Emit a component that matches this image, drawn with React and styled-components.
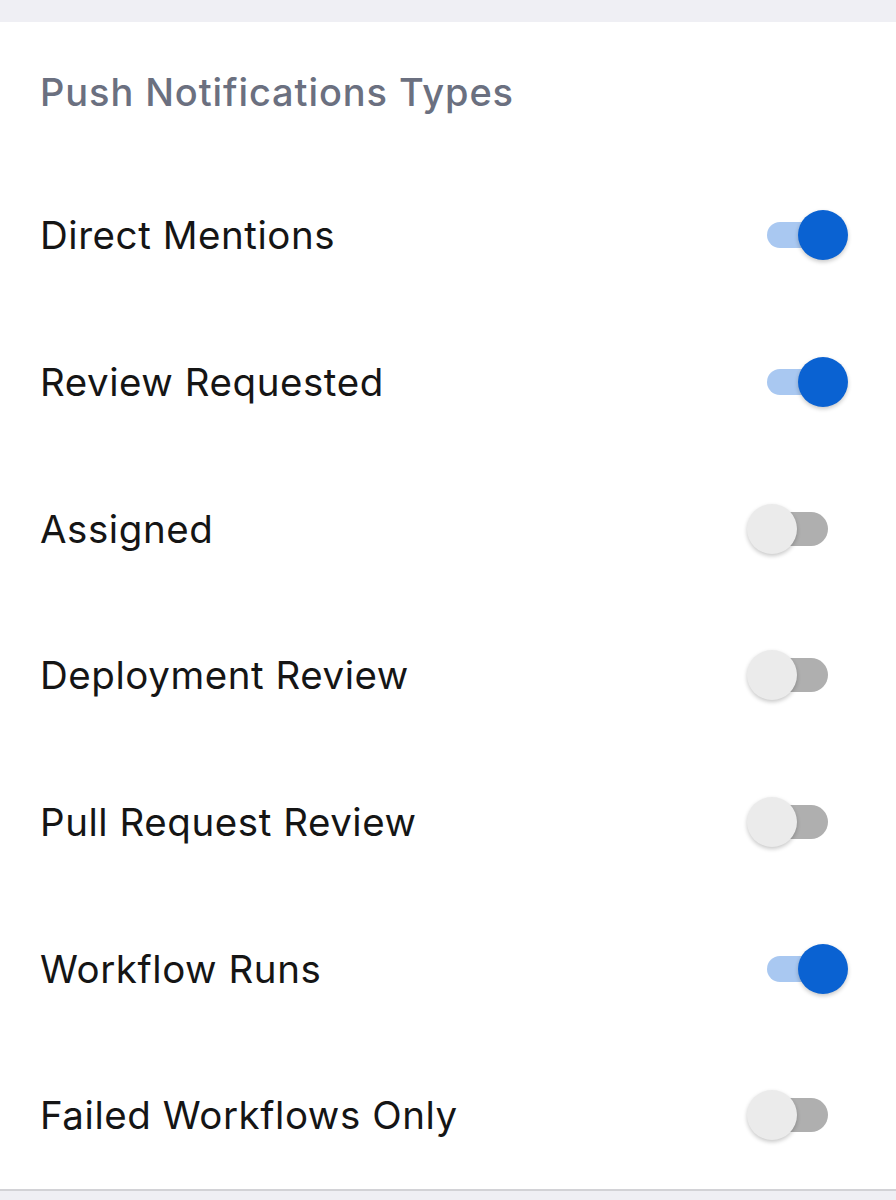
import React, { useState } from "react";
import styled, { createGlobalStyle } from "styled-components";

const GlobalStyle = createGlobalStyle`
  html, body {
    margin: 0;
    padding: 0;
    background: #efeff4;
    font-family: Inter, "Noto Sans", sans-serif;
  }
`;

const types = [
  { id: "mentions", label: "Direct Mentions", on: true },
  { id: "review", label: "Review Requested", on: true },
  { id: "assigned", label: "Assigned", on: false },
  { id: "deploy", label: "Deployment Review", on: false },
  { id: "pr", label: "Pull Request Review", on: false },
  { id: "runs", label: "Workflow Runs", on: true },
  { id: "failed", label: "Failed Workflows Only", on: false },
];

const Page = styled.div`
  width: 896px;
  height: 1200px;
  padding-top: 22px;
  box-sizing: border-box;
  background: #efeff4;
  overflow: hidden;
`;

const Panel = styled.section`
  background: #fff;
  border-bottom: 2px solid #d2d2d6;
`;

const Heading = styled.h2`
  margin: 0;
  height: 140px;
  display: flex;
  align-items: center;
  padding: 0 40px;
  font-size: 38px;
  font-weight: 500;
  color: #6b7080;
  letter-spacing: 0.9px;
`;

const Row = styled.div`
  height: 146.7px;
  display: flex;
  align-items: center;
  justify-content: space-between;
  padding: 0 48px 0 40px;
`;

const Label = styled.span`
  font-size: 38.5px;
  color: #151515;
  letter-spacing: 0.55px;
`;

const Switch = styled.button`
  position: relative;
  width: 101px;
  height: 50px;
  padding: 0;
  border: 0;
  background: none;
  cursor: pointer;
`;

const Track = styled.span`
  position: absolute;
  top: 50%;
  transform: translateY(-50%);
  left: ${(p) => (p.$on ? "20px" : "13px")};
  right: ${(p) => (p.$on ? "18px" : "20px")};
  height: ${(p) => (p.$on ? "26px" : "34px")};
  border-radius: 17px;
  background: ${(p) => (p.$on ? "#a9c8f1" : "#afafaf")};
`;

const Thumb = styled.span`
  position: absolute;
  top: 0;
  left: ${(p) => (p.$on ? "51px" : "0")};
  width: 50px;
  height: 50px;
  border-radius: 50%;
  background: ${(p) => (p.$on ? "#0a62d2" : "#ebebeb")};
  box-shadow: 0 2px 4px rgba(0, 0, 0, 0.22);
`;

const Toggle = ({ on, onClick }) => (
  <Switch onClick={onClick} aria-pressed={on}>
    <Track $on={on} />
    <Thumb $on={on} />
  </Switch>
);

const App = () => {
  const [state, setState] = useState(types);

  const flip = (id) =>
    setState((s) => s.map((t) => (t.id === id ? { ...t, on: !t.on } : t)));

  return (
    <Page>
      <GlobalStyle />
      <Panel>
        <Heading>Push Notifications Types</Heading>
        {state.map((t) => (
          <Row key={t.id}>
            <Label>{t.label}</Label>
            <Toggle on={t.on} onClick={() => flip(t.id)} />
          </Row>
        ))}
      </Panel>
    </Page>
  );
};

export default App;
